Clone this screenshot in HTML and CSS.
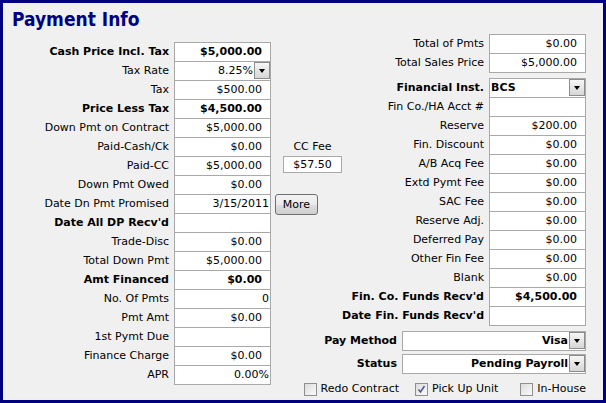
FILE: index.html
```html
<!DOCTYPE html>
<html lang="en">
<head>
    <meta charset="UTF-8">
    <title>Payment Info</title>
    <link rel="stylesheet" href="styles.css">
</head>
<body>
    <div class="panel">
        <h1 class="title">Payment Info</h1>
        <div class="columns">
            <!-- Left column: price and down payment -->
            <div class="fields fields-left">
                <div class="label strong">Cash Price Incl. Tax</div>
                <div class="box"><span class="value strong">$5,000.00</span></div>
                <div class="label">Tax Rate</div>
                <div class="box"><span class="value tight">8.25%</span><span class="drop"></span></div>
                <div class="label">Tax</div>
                <div class="box"><span class="value">$500.00</span></div>
                <div class="label strong">Price Less Tax</div>
                <div class="box"><span class="value strong">$4,500.00</span></div>
                <div class="label">Down Pmt on Contract</div>
                <div class="box"><span class="value">$5,000.00</span></div>
                <div class="label">Paid-Cash/Ck</div>
                <div class="box"><span class="value">$0.00</span></div>
                <div class="label">Paid-CC</div>
                <div class="box"><span class="value">$5,000.00</span></div>
                <div class="label">Down Pmt Owed</div>
                <div class="box"><span class="value">$0.00</span></div>
                <div class="label">Date Dn Pmt Promised</div>
                <div class="box"><span class="value tight">3/15/2011</span></div>
                <div class="label strong">Date All DP Recv'd</div>
                <div class="box"><span class="value"></span></div>
                <div class="label">Trade-Disc</div>
                <div class="box"><span class="value">$0.00</span></div>
                <div class="label">Total Down Pmt</div>
                <div class="box"><span class="value">$5,000.00</span></div>
                <div class="label strong">Amt Financed</div>
                <div class="box"><span class="value strong">$0.00</span></div>
                <div class="label">No. Of Pmts</div>
                <div class="box"><span class="value tight">0</span></div>
                <div class="label">Pmt Amt</div>
                <div class="box"><span class="value">$0.00</span></div>
                <div class="label">1st Pymt Due</div>
                <div class="box"><span class="value"></span></div>
                <div class="label">Finance Charge</div>
                <div class="box"><span class="value">$0.00</span></div>
                <div class="label">APR</div>
                <div class="box"><span class="value tight">0.00%</span></div>
            </div>

            <!-- Middle: credit card fee -->
            <div class="cc">
                <div class="cc-label">CC Fee</div>
                <div class="cc-box">$57.50</div>
                <button class="more" type="button">More</button>
            </div>

            <!-- Right column: totals and finance company -->
            <div class="right-col">
                <div class="fields">
                    <div class="label">Total of Pmts</div>
                    <div class="box"><span class="value">$0.00</span></div>
                    <div class="label">Total Sales Price</div>
                    <div class="box"><span class="value">$5,000.00</span></div>
                </div>

                <div class="fields group-fin">
                    <div class="label strong">Financial Inst.</div>
                    <div class="box"><span class="value left strong">BCS</span><span class="drop"></span></div>
                    <div class="label">Fin Co./HA Acct #</div>
                    <div class="box"><span class="value"></span></div>
                    <div class="label">Reserve</div>
                    <div class="box"><span class="value">$200.00</span></div>
                    <div class="label">Fin. Discount</div>
                    <div class="box"><span class="value">$0.00</span></div>
                    <div class="label">A/B Acq Fee</div>
                    <div class="box"><span class="value">$0.00</span></div>
                    <div class="label">Extd Pymt Fee</div>
                    <div class="box"><span class="value">$0.00</span></div>
                    <div class="label">SAC Fee</div>
                    <div class="box"><span class="value">$0.00</span></div>
                    <div class="label">Reserve Adj.</div>
                    <div class="box"><span class="value">$0.00</span></div>
                    <div class="label">Deferred Pay</div>
                    <div class="box"><span class="value">$0.00</span></div>
                    <div class="label">Other Fin Fee</div>
                    <div class="box"><span class="value">$0.00</span></div>
                    <div class="label">Blank</div>
                    <div class="box"><span class="value">$0.00</span></div>
                    <div class="label strong">Fin. Co. Funds Recv'd</div>
                    <div class="box"><span class="value strong">$4,500.00</span></div>
                    <div class="label strong">Date Fin. Funds Recv'd</div>
                    <div class="box"><span class="value"></span></div>
                </div>

                <div class="pay">
                    <div class="label strong">Pay Method</div>
                    <div class="box"><span class="value tight strong">Visa</span><span class="drop"></span></div>
                    <div class="label strong">Status</div>
                    <div class="box"><span class="value tight strong">Pending Payroll</span><span class="drop"></span></div>
                </div>

                <div class="checks">
                    <label class="check"><span class="cb"></span>Redo Contract</label>
                    <label class="check check-pick"><span class="cb"><svg width="11" height="11" viewBox="0 0 11 11"><path d="M2.5 5.5 L4.5 8 L8.5 2" fill="none" stroke="#4a5f8f" stroke-width="1.6"/></svg></span>Pick Up Unit</label>
                    <label class="check check-house"><span class="cb"></span>In-House</label>
                </div>
            </div>
        </div>
    </div>
</body>
</html>
```

FILE: styles.css
```css
body {
    margin: 0;
    font-family: "DejaVu Sans", Verdana, sans-serif;
    font-size: 11px;
    color: #000;
}
.panel {
    width: 606px;
    height: 403px;
    box-sizing: border-box;
    border: 3px solid #000080;
    background-color: #f0f0f0;
}
.title {
    margin: 5px 0 0;
    padding-left: 9px;
    font-family: "DejaVu Sans Condensed", "DejaVu Sans", sans-serif;
    font-stretch: condensed;
    font-size: 19px;
    line-height: 22px;
    font-weight: bold;
    color: #000080;
}
.columns {
    display: flex;
    align-items: flex-start;
    padding-right: 17px;
}
.fields {
    display: grid;
    grid-template-columns: auto 97px;
    grid-auto-rows: 19px;
    column-gap: 5px;
}
.fields-left {
    grid-template-columns: 160px 97px;
    margin: 12px 0 0 6px;
}
.label {
    text-align: right;
    line-height: 20px;
    white-space: nowrap;
}
.strong {
    font-weight: bold;
}
.box {
    display: flex;
    align-items: flex-start;
    height: 20px;
    box-sizing: border-box;
    border: 1px solid #a9a9a9;
    background-color: #fff;
    line-height: 18px;
}
.value {
    flex: 1;
    text-align: right;
    padding-right: 8px;
    white-space: nowrap;
}
.value.tight {
    padding-right: 1px;
}
.value.left {
    text-align: left;
    padding-left: 1px;
}
.drop {
    display: flex;
    align-items: center;
    justify-content: center;
    width: 14px;
    height: 15px;
    border: 1px solid #8c8c8c;
    background: linear-gradient(#f6f6f6, #d6d6d6);
}
.drop:after {
    content: "";
    border-top: 4px solid #000;
    border-left: 3px solid transparent;
    border-right: 3px solid transparent;
}

/* CC fee and More button */
.cc {
    flex: none;
    width: 62px;
    margin: 109px 0 0 4px;
}
.cc-label {
    width: 59px;
    margin-left: 8px;
    text-align: center;
    line-height: 16px;
}
.cc-box {
    width: 59px;
    height: 17px;
    margin: 1px 0 0 8px;
    box-sizing: border-box;
    border: 1px solid #a9a9a9;
    background-color: #fff;
    text-align: center;
    line-height: 15px;
}
.more {
    display: block;
    width: 43px;
    height: 21px;
    margin-top: 21px;
    padding: 0;
    font-family: inherit;
    font-size: 11px;
    color: #000;
    border: 1px solid #707070;
    border-radius: 3px;
    background: linear-gradient(#f2f2f2 0%, #ebebeb 50%, #dddddd 51%, #cfcfcf 100%);
}

/* Right column */
.right-col {
    flex: 1;
    min-width: 0;
    display: flex;
    flex-direction: column;
    align-items: flex-end;
    margin-top: 4px;
}
.group-fin {
    margin-top: 6px;
}
.pay {
    display: grid;
    grid-template-columns: auto 184px;
    grid-auto-rows: 20px;
    row-gap: 3px;
    column-gap: 5px;
    margin-top: 6px;
}
.checks {
    display: flex;
    align-items: center;
    margin-top: 7px;
    line-height: 16px;
    white-space: nowrap;
}
.check {
    display: flex;
    align-items: center;
    gap: 4px;
}
.check-pick {
    margin-left: 16px;
}
.check-house {
    margin-left: 22px;
}
.cb {
    display: flex;
    align-items: center;
    justify-content: center;
    width: 13px;
    height: 13px;
    box-sizing: border-box;
    border: 1px solid #8f8f8f;
    background: linear-gradient(135deg, #dcdcdc, #fbfbfb);
}
```
